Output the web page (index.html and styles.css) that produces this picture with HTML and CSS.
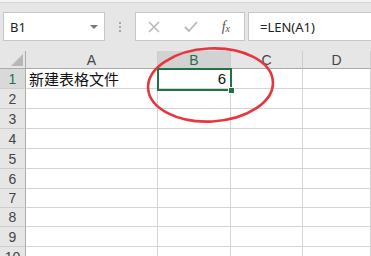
FILE: index.html
```html
<!DOCTYPE html>
<html>
<head>
<meta charset="utf-8">
<link rel="stylesheet" href="styles.css">
</head>
<body>
<div class="app">
  <div class="topline"></div>
  <div class="formula-bar">
    <div class="name-box">
      <span class="name-text">B1</span>
      <span class="dropdown"></span>
    </div>
    <div class="grip"><i></i><i></i><i></i></div>
    <div class="buttons">
      <svg class="btn-icon" width="14" height="14" viewBox="0 0 14 14"><path d="M2 2 L12 12 M12 2 L2 12" stroke="#b8b8b8" stroke-width="1.6" fill="none"/></svg>
      <svg class="btn-icon" width="16" height="14" viewBox="0 0 16 14"><path d="M2 7 L6 11 L14 2" stroke="#b8b8b8" stroke-width="1.8" fill="none"/></svg>
      <span class="fx">f<sub>x</sub></span>
    </div>
    <div class="formula-input">=LEN(A1)</div>
  </div>
  <div class="sheet">
    <div class="grid">
      <div class="corner"><span class="tri"></span></div>
      <div class="colhead">A</div>
      <div class="colhead sel">B</div>
      <div class="colhead">C</div>
      <div class="colhead">D</div>

      <div class="rowhead sel">1</div>
      <div class="cell text">新建表格文件</div>
      <div class="cell num">6</div>
      <div class="cell"></div>
      <div class="cell"></div>

      <div class="rowhead">2</div><div class="cell"></div><div class="cell"></div><div class="cell"></div><div class="cell"></div>
      <div class="rowhead">3</div><div class="cell"></div><div class="cell"></div><div class="cell"></div><div class="cell"></div>
      <div class="rowhead">4</div><div class="cell"></div><div class="cell"></div><div class="cell"></div><div class="cell"></div>
      <div class="rowhead">5</div><div class="cell"></div><div class="cell"></div><div class="cell"></div><div class="cell"></div>
      <div class="rowhead">6</div><div class="cell"></div><div class="cell"></div><div class="cell"></div><div class="cell"></div>
      <div class="rowhead">7</div><div class="cell"></div><div class="cell"></div><div class="cell"></div><div class="cell"></div>
      <div class="rowhead">8</div><div class="cell"></div><div class="cell"></div><div class="cell"></div><div class="cell"></div>
      <div class="rowhead">9</div><div class="cell"></div><div class="cell"></div><div class="cell"></div><div class="cell"></div>
      <div class="rowhead">10</div><div class="cell"></div><div class="cell"></div><div class="cell"></div><div class="cell"></div>
    </div>
    <div class="selection"><span class="handle"></span></div>
    <svg class="circle" width="371" height="256" viewBox="0 0 371 256">
      <ellipse cx="210.5" cy="85" rx="62.5" ry="36.5" transform="rotate(-3 210.5 85)" fill="none" stroke="#e8363c" stroke-width="2.6"/>
    </svg>
  </div>
</div>
</body>
</html>
```
FILE: styles.css
```css
html, body {
  margin: 0;
  padding: 0;
}
body {
  width: 371px;
  height: 256px;
  overflow: hidden;
  background: #e6e6e6;
  font-family: "Liberation Sans", Arial, sans-serif;
}
.app {
  position: relative;
  width: 371px;
  height: 256px;
  overflow: hidden;
}
.topline {
  height: 2px;
  background: #f4f4f4;
  border-bottom: 1px solid #d4d4d4;
}
.formula-bar {
  display: flex;
  align-items: stretch;
  height: 29px;
  margin-top: 9px;
  padding-left: 3px;
}
.name-box {
  box-sizing: border-box;
  width: 102px;
  background: #fff;
  border: 1px solid #c6c6c6;
  display: flex;
  align-items: center;
  justify-content: space-between;
  padding: 0 6px 0 6px;
}
.name-text {
  font-family: "Noto Sans", "Open Sans", sans-serif;
  font-size: 13px;
  color: #222;
}
.dropdown {
  width: 0;
  height: 0;
  border-left: 4px solid transparent;
  border-right: 4px solid transparent;
  border-top: 4px solid #777;
  margin-top: 1px;
}
.grip {
  width: 30px;
  display: flex;
  flex-direction: column;
  align-items: center;
  justify-content: center;
  gap: 2px;
}
.grip i {
  display: block;
  width: 2px;
  height: 2px;
  background: #a8a8a8;
}
.buttons {
  box-sizing: border-box;
  width: 110px;
  background: #fff;
  border: 1px solid #c6c6c6;
  display: flex;
  align-items: center;
  justify-content: space-between;
  padding: 0 14px 0 11px;
}
.btn-icon {
  display: block;
}
.fx {
  font-family: "Liberation Serif", "Times New Roman", serif;
  font-style: italic;
  font-size: 14px;
  color: #555;
  line-height: 1;
}
.fx sub {
  font-size: 10px;
  vertical-align: -1px;
}
.formula-input {
  box-sizing: border-box;
  flex: 1;
  margin-left: 3px;
  background: #fff;
  border: 1px solid #c6c6c6;
  border-right: none;
  font-family: "Noto Sans", "Open Sans", sans-serif;
  font-size: 13px;
  color: #222;
  display: flex;
  align-items: center;
  padding-left: 11px;
}
.sheet {
  position: relative;
  margin-top: 10px;
}
.grid {
  display: grid;
  grid-template-columns: 26px 132px 73px 72px 68px;
  grid-template-rows: 18px 20px 20px 20px 20px 20px 20px 19px 19px 20px 20px;
  background: #fff;
}
.corner {
  position: relative;
  box-sizing: border-box;
  background: #e6e6e6;
  border-right: 1px solid #ababab;
  border-bottom: 1px solid #ababab;
}
.tri {
  position: absolute;
  right: 2px;
  bottom: 2px;
  width: 0;
  height: 0;
  border-left: 12px solid transparent;
  border-bottom: 12px solid #b7b7b7;
}
.colhead {
  box-sizing: border-box;
  background: #e6e6e6;
  border-right: 1px solid #cdcdcd;
  border-bottom: 1px solid #ababab;
  font-size: 14px;
  color: #444;
  display: flex;
  align-items: flex-end;
  justify-content: center;
  line-height: 16px;
}
.colhead.sel {
  background: #d2d2d2;
  color: #217346;
}
.rowhead {
  box-sizing: border-box;
  background: #e6e6e6;
  border-right: 1px solid #ababab;
  border-bottom: 1px solid #cdcdcd;
  font-size: 14px;
  color: #444;
  display: flex;
  align-items: center;
  justify-content: center;
}
.rowhead.sel {
  background: #d9d9d9;
  color: #217346;
}
.cell {
  box-sizing: border-box;
  border-right: 1px solid #d4d4d4;
  border-bottom: 1px solid #d4d4d4;
  font-size: 15px;
  color: #111;
  display: flex;
  align-items: center;
  overflow: visible;
  white-space: nowrap;
}
.cell.text {
  font-family: "Noto Sans CJK SC", sans-serif;
  padding-left: 3px;
}
.cell.num {
  justify-content: flex-end;
  padding-right: 4px;
  font-family: "Liberation Sans", Arial, sans-serif;
}
.selection {
  position: absolute;
  left: 157px;
  top: 17px;
  width: 71px;
  height: 19px;
  border: 2px solid #217346;
}
.handle {
  position: absolute;
  right: -5px;
  bottom: -5px;
  width: 5px;
  height: 5px;
  background: #217346;
  border: 1px solid #fff;
}
.circle {
  position: absolute;
  left: 0;
  top: -51px;
  pointer-events: none;
}
```
